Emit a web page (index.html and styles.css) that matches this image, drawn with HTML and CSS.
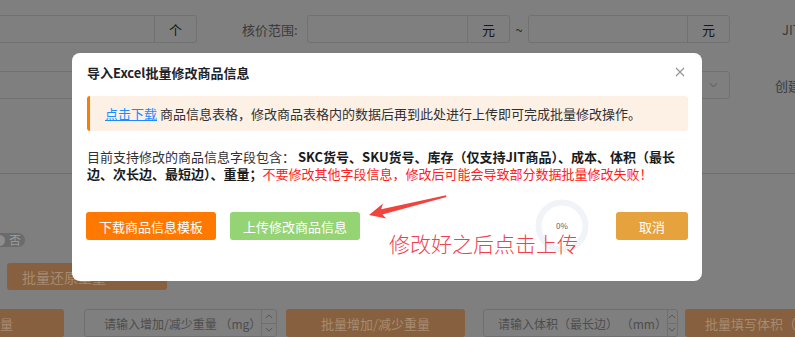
FILE: index.html
```html
<!DOCTYPE html>
<html lang="zh-CN">
<head>
<meta charset="utf-8">
<title>导入Excel批量修改商品信息</title>
<link rel="stylesheet" href="styles.css">
</head>
<body>
<div class="page">
  <div class="row r1">
    <div class="ig ig-count"><div class="inp"></div><div class="append">个</div></div>
    <label class="lbl lbl-price">核价范围:</label>
    <div class="ig ig-price1"><div class="inp"></div><div class="append">元</div></div>
    <span class="tilde">~</span>
    <div class="ig ig-price2"><div class="inp"></div><div class="append">元</div></div>
    <label class="lbl lbl-jit">JIT</label>
  </div>
  <div class="row r2">
    <div class="select"><svg class="chev" viewBox="0 0 10 6" width="9" height="6"><path d="M1 1l4 4 4-4" fill="none" stroke="#555" stroke-width="1"/></svg></div>
    <label class="lbl lbl-create">创建</label>
  </div>
  <div class="divider"></div>
  <div class="row r3">
    <span class="switch"><span class="knob"></span><span class="sw-text">否</span></span>
  </div>
  <div class="row r4">
    <button class="bg-btn bg-btn-restore">批量还原重量</button>
  </div>
  <div class="row r5">
    <button class="bg-btn bg-btn-w">批量填写重量</button>
    <div class="num num-w">
      <span class="num-ph">请输入增加/减少重量 （mg）</span>
      <div class="spin"><span class="sp-up"><svg viewBox="0 0 10 6" width="8" height="5"><path d="M1 5l4-4 4 4" fill="none" stroke="#4a4a4a" stroke-width="1"/></svg></span><span class="sp-down"><svg viewBox="0 0 10 6" width="8" height="5"><path d="M1 1l4 4 4-4" fill="none" stroke="#4a4a4a" stroke-width="1"/></svg></span></div>
    </div>
    <button class="bg-btn bg-btn-add">批量增加/减少重量</button>
    <div class="num num-v">
      <span class="num-ph">请输入体积（最长边） （mm）</span>
      <div class="spin"><span class="sp-up"><svg viewBox="0 0 10 6" width="8" height="5"><path d="M1 5l4-4 4 4" fill="none" stroke="#4a4a4a" stroke-width="1"/></svg></span><span class="sp-down"><svg viewBox="0 0 10 6" width="8" height="5"><path d="M1 1l4 4 4-4" fill="none" stroke="#4a4a4a" stroke-width="1"/></svg></span></div>
    </div>
    <button class="bg-btn bg-btn-vol">批量填写体积（最长边）</button>
  </div>
</div>

<div class="modal">
  <div class="m-head">
    <span class="m-title">导入Excel批量修改商品信息</span>
    <svg class="m-close" viewBox="0 0 10 10" width="10" height="10"><path d="M1 1l8 8M9 1l-8 8" stroke="#909399" stroke-width="1.1" fill="none"/></svg>
  </div>
  <div class="m-body">
    <div class="alert"><a class="link">点击下载</a>&nbsp;商品信息表格，修改商品表格内的数据后再到此处进行上传即可完成批量修改操作。</div>
    <p class="desc">目前支持修改的商品信息字段包含：&nbsp;<b>SKC货号、SKU货号、库存（仅支持JIT商品）、成本、体积（最长边、次长边、最短边）、重量；</b><span class="warn">不要修改其他字段信息，修改后可能会导致部分数据批量修改失败！</span></p>
    <div class="m-foot">
      <button class="btn btn-orange">下载商品信息模板</button>
      <button class="btn btn-green">上传修改商品信息</button>
      <div class="ring">
        <svg viewBox="0 0 54 54" width="54" height="54"><circle cx="27" cy="27" r="23.5" fill="none" stroke="#f0f3f7" stroke-width="6"/></svg>
        <span class="ring-text">0%</span>
      </div>
      <button class="btn btn-cancel">取消</button>
    </div>
  </div>
</div>

<svg class="annot-arrow" viewBox="0 0 795 337" width="795" height="337">
  <polygon points="369,215 383,203.5 381.2,209.3 446,195.3 446.5,197 382.4,214.4 386.3,218.5" fill="#f0443c"/>
</svg>
<div class="annot-text">修改好之后点击上传</div>
</body>
</html>
```
FILE: styles.css
```css
* { box-sizing: border-box; margin: 0; padding: 0; }
html, body { width: 795px; height: 337px; overflow: hidden; }
body {
  background: #7f7f7f;
  font-family: "Noto Sans CJK SC", "Microsoft YaHei", "Liberation Sans", sans-serif;
  font-size: 13px;
  position: relative;
}
button { font-family: inherit; border: 0; cursor: pointer; }

/* ---------- dimmed background page ---------- */
.page { padding-top: 15px; }
.row { display: flex; align-items: center; white-space: nowrap; }
.row > * { flex: none; }
.r1 { height: 28px; }
.ig {
  display: flex; height: 28px;
  border: 1px solid #717171; border-radius: 3px;
}
.ig .inp { flex: 1; }
.ig .append {
  width: 42px; border-left: 1px solid #717171;
  display: flex; align-items: center; justify-content: center;
  color: #161616; font-size: 13px;
}
.ig-count { margin-left: -10px; width: 207px; }
.lbl { color: #3a3a3a; font-size: 13px; }
.lbl-price { margin-left: 45px; width: 54px; }
.ig-price1 { margin-left: 11px; width: 203px; }
.tilde { width: 18px; text-align: center; color: #2a2a2a; }
.ig-price2 { width: 202px; }
.lbl-jit { margin-left: 52px; }

.r2 { margin-top: 28px; height: 28px; }
.select {
  margin-left: -10px; width: 740px; height: 28px;
  border: 1px solid #717171; border-radius: 3px;
  display: flex; align-items: center; justify-content: flex-end;
  padding-right: 11px;
}
.lbl-create { margin-left: 45px; }

.divider { margin-top: 74px; height: 1px; background: #6d6d6d; }

.r3 { margin-top: 59px; height: 14px; }
.switch {
  margin-left: -22px; width: 47px; height: 14px;
  background: #6b6b6b; border-radius: 7px;
  display: flex; align-items: center; padding-left: 16px;
}
.knob { width: 11px; height: 11px; border-radius: 50%; background: #8d8d8d; }
.sw-text { margin-left: 4px; color: #9c9c9c; font-size: 12px; line-height: 14px; }

.bg-btn {
  height: 27px; border-radius: 3px;
  background: #86603f; color: #a68b72;
  font-size: 13px;
  display: flex; align-items: center; justify-content: center;
}
.r4 { margin-top: 16px; }
.bg-btn-restore { margin-left: 7px; width: 160px; justify-content: flex-start; padding-left: 15px; font-size: 14px; }

.r5 { margin-top: 19px; height: 28px; }
.r5 .bg-btn { height: 28px; }
.bg-btn-w { margin-left: -100px; width: 164px; justify-content: flex-start; padding-left: 35px; }
.num {
  height: 28px; border: 1px solid #6f6f6f; border-radius: 3px;
  display: flex; align-items: center;
}
.num-ph { flex: 1; color: #4d4d4d; font-size: 12px; padding-left: 19px; }
.spin { width: 28px; height: 100%; border-left: 1px solid #6f6f6f; display: flex; flex-direction: column; }
.spin span { flex: 1; display: flex; align-items: center; justify-content: center; }
.spin .sp-up { border-bottom: 1px solid #6f6f6f; }
.num-w { margin-left: 20px; width: 193px; }
.bg-btn-add { margin-left: 9px; width: 179px; }
.num-v { margin-left: 18px; width: 195px; }
.num-v .num-ph { padding-left: 14px; }
.num-v .spin { width: 29px; }
.bg-btn-vol { margin-left: 7px; width: 170px; justify-content: flex-start; padding-left: 20px; }

/* ---------- modal ---------- */
.modal {
  position: absolute; left: 72px; top: 53px;
  width: 630px; height: 228px;
  background: #fff; border-radius: 8px;
}
.m-head {
  display: flex; align-items: center; justify-content: space-between;
  padding: 10px 17px 0 15px; height: 30px;
}
.m-title { font-size: 13px; font-weight: 700; color: #1f2329; line-height: 20px; }
.m-close { margin-top: -2px; }
.m-body { padding: 13px 14px 0 15px; }
.alert {
  height: 35px; background: #fdf0e5;
  border-left: 3px solid #ff7a00; border-radius: 3px;
  display: flex; align-items: center; padding-left: 15px;
  color: #303133; font-size: 13px; white-space: nowrap;
}
.link { color: #1a8cff; text-decoration: underline; }
.desc {
  margin-top: 17px; font-size: 13px; line-height: 17px; color: #303133;
}
.desc b { font-weight: 700; color: #1a1a1a; }
.warn { color: #ff2020; }
.m-foot { margin-top: 30px; display: flex; align-items: center; height: 28px; }
.btn {
  height: 28px; border-radius: 3px; color: #fff; font-size: 13px;
  padding: 0 13px; flex: none;
}
.btn-orange { background: #ff7800; width: 130px; margin-left: -1px; }
.btn-green { background: #95d475; width: 130px; margin-left: 14px; }
.ring {
  margin-left: auto; width: 54px; height: 54px; position: relative; flex: none;
  display: flex; align-items: center; justify-content: center;
}
.ring svg { position: absolute; left: 0; top: 0; }
.ring-text { position: relative; font-size: 8px; color: #606266; margin-top: -2px; }
.btn-cancel { background: #e6a23c; width: 72px; margin-left: 27px; }

/* ---------- annotation overlay ---------- */
.annot-arrow { position: absolute; left: 0; top: 0; pointer-events: none; }
.annot-text {
  position: absolute; left: 389px; top: 231px;
  font-size: 21px; line-height: 24px; color: #f0414d; font-weight: 300;
  white-space: nowrap;
}
```
